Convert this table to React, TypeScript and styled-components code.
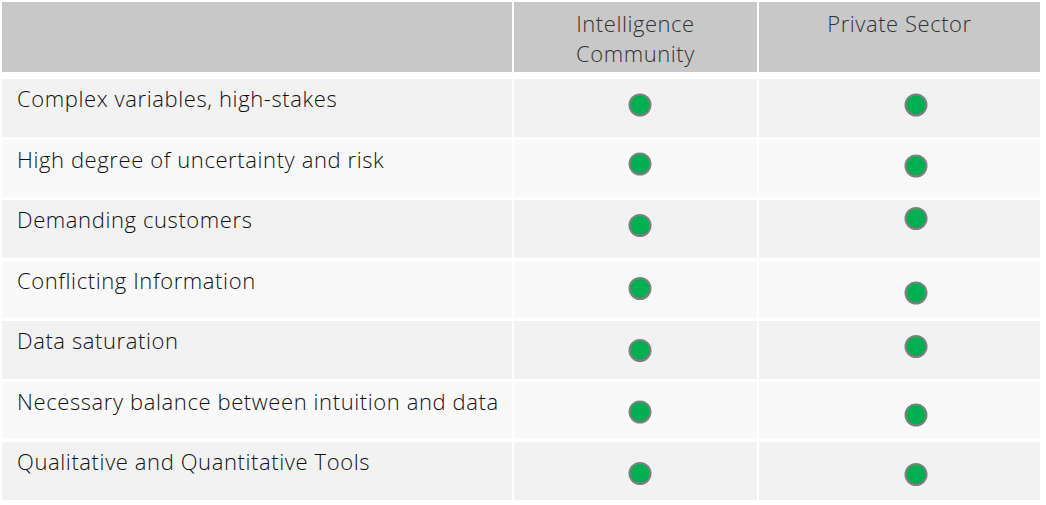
import React from "react";
import styled, { createGlobalStyle } from "styled-components";

const GlobalStyle = createGlobalStyle`
  html, body {
    margin: 0;
    padding: 0;
    background: #ffffff;
  }
  body {
    font-family: "Open Sans", "Noto Sans", "Liberation Sans", sans-serif;
  }
`;

const Page = styled.div`
  width: 1046px;
  height: 505px;
  padding: 2px 6px 0 2px;
  box-sizing: border-box;
  background: #ffffff;
`;

const Table = styled.div`
  display: flex;
  flex-direction: column;
  gap: 3px;
  width: 1038px;
`;

const COLS = "510px 243px 281px";

const HeaderRow = styled.div`
  display: grid;
  grid-template-columns: ${COLS};
  column-gap: 2px;
  height: 70px;
  margin-bottom: 4px;
`;

const HeaderCell = styled.div`
  background: #c8c8c8;
  color: #333333;
  font-size: 22px;
  font-weight: 300;
  line-height: 30px;
  text-align: center;
  padding-top: 6px;
  box-sizing: border-box;
  letter-spacing: 0.55px;
`;

const Row = styled.div<{ $shade: boolean }>`
  display: grid;
  grid-template-columns: ${COLS};
  column-gap: 2px;
  height: 57.5px;
  & > * {
    background: ${(p) => (p.$shade ? "#f2f2f2" : "#f9f9f9")};
  }
`;

const LabelCell = styled.div`
  color: #111111;
  font-size: 22px;
  font-weight: 300;
  line-height: 28px;
  padding: 5px 0 0 15px;
  box-sizing: border-box;
  letter-spacing: 0.6px;
  white-space: nowrap;
`;

const MarkCell = styled.div`
  display: flex;
  align-items: center;
  justify-content: center;
`;

const Dot = styled.span<{ $dx: number; $dy: number }>`
  display: block;
  width: 23px;
  height: 23px;
  box-sizing: border-box;
  border-radius: 50%;
  background: #00b050;
  border: 2px solid #7f7f7f;
  transform: translate(${(p) => p.$dx}px, ${(p) => p.$dy}px);
`;

type RowData = { label: string; a: number; b: number };

// vertical offsets (px) of each dot from the cell's middle, as placed on the slide
const rows: RowData[] = [
  { label: "Complex variables, high-stakes", a: -2.5, b: -2.5 },
  { label: "High degree of uncertainty and risk", a: -4.5, b: -2.5 },
  { label: "Demanding customers", a: -3, b: -10 },
  { label: "Conflicting Information", a: -1, b: 3.5 },
  { label: "Data saturation", a: 1, b: -3 },
  { label: "Necessary balance between intuition and data", a: 1.5, b: 4.5 },
  { label: "Qualitative and Quantitative Tools", a: 3, b: 4 },
];

export default function App() {
  return (
    <>
      <GlobalStyle />
      <Page>
        <Table>
          <HeaderRow>
            <HeaderCell />
            <HeaderCell>
              Intelligence
              <br />
              Community
            </HeaderCell>
            <HeaderCell>Private Sector</HeaderCell>
          </HeaderRow>
          {rows.map((r, i) => (
            <Row key={r.label} $shade={i % 2 === 0}>
              <LabelCell>{r.label}</LabelCell>
              <MarkCell>
                <Dot $dx={4.5} $dy={r.a} />
              </MarkCell>
              <MarkCell>
                <Dot $dx={16.5} $dy={r.b} />
              </MarkCell>
            </Row>
          ))}
        </Table>
      </Page>
    </>
  );
}
